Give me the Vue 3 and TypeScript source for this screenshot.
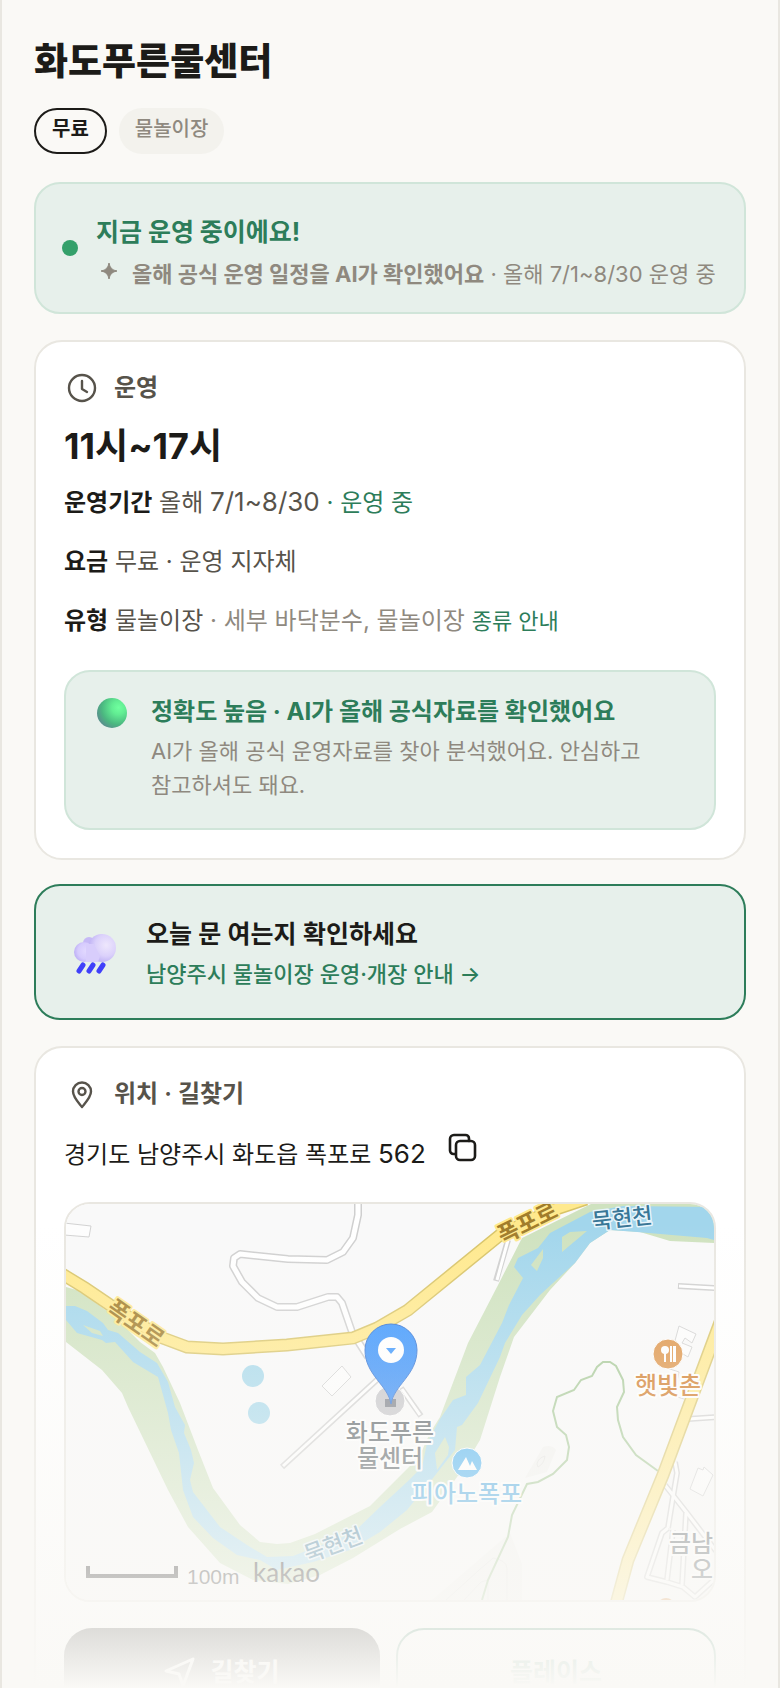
<script setup lang="ts">
const badges = [
  { label: '무료', strong: true },
  { label: '물놀이장', strong: false },
]

const street = '경기도 남양주시 화도읍 폭포로'
const streetNumber = '562'

function copyAddress(): void {
  navigator.clipboard?.writeText(`${street} ${streetNumber}`)
}
</script>

<template>
  <div class="screen">
    <main class="page">
      <header class="head">
        <h1>화도푸른물센터</h1>
        <ul class="badges">
          <li v-for="b in badges" :key="b.label" :class="['badge', { strong: b.strong }]">{{ b.label }}</li>
        </ul>
      </header>

      <section class="status">
        <span class="dot"></span>
        <div>
          <p class="status-title">지금 운영 중이에요!</p>
          <p class="status-sub">
            <svg class="spark" viewBox="0 0 24 24" aria-hidden="true">
              <path d="M13 4 Q14 11 21 12 Q14 13 13 20 Q12 13 5 12 Q12 11 13 4Z" fill="#8f897f" stroke="#8f897f" stroke-linejoin="round" />
            </svg>
            <span><b>올해 공식 운영 일정을 AI가 확인했어요</b> · 올해 7/1~8/30 운영 중</span>
          </p>
        </div>
      </section>

      <section class="card">
        <h2>
          <svg class="head-icon" viewBox="0 0 36 36" aria-hidden="true">
            <circle cx="18" cy="18" r="13" />
            <path d="M18 11v8l5 3" />
          </svg>
          운영
        </h2>
        <p class="hours">11시~17시</p>
        <p class="row"><b>운영기간</b> 올해 <span class="num">7/1~8/30</span> <span class="green">· 운영 중</span></p>
        <p class="row"><b>요금</b> 무료 · 운영 지자체</p>
        <p class="row"><b>유형</b> 물놀이장 <span class="muted">· 세부 바닥분수, 물놀이장</span> <a class="guide" href="#types">종류 안내</a></p>
        <div class="accuracy">
          <svg class="ball" viewBox="0 0 30 30" aria-hidden="true">
            <defs>
              <radialGradient id="ball-fill" cx="0.72" cy="0.32" r="0.75">
                <stop offset="0" stop-color="#70ff9f" />
                <stop offset="0.3" stop-color="#62ed93" />
                <stop offset="0.75" stop-color="#4bb780" />
                <stop offset="1" stop-color="#58938c" />
              </radialGradient>
            </defs>
            <circle cx="15" cy="15" r="15" fill="url(#ball-fill)" />
          </svg>
          <div>
            <p class="accuracy-title">정확도 높음 · AI가 올해 공식자료를 확인했어요</p>
            <p class="accuracy-text">AI가 올해 공식 운영자료를 찾아 분석했어요. 안심하고 참고하셔도 돼요.</p>
          </div>
        </div>
      </section>

      <a class="notice" href="#notice">
        <svg class="cloud" viewBox="0 0 46 46" aria-hidden="true">
          <defs>
            <radialGradient id="cloud-big" cx="0.65" cy="0.4" r="0.65">
              <stop offset="0" stop-color="#eee7fc" />
              <stop offset="0.6" stop-color="#dbd1fb" />
              <stop offset="1" stop-color="#bdb0f4" />
            </radialGradient>
            <radialGradient id="cloud-small" cx="0.6" cy="0.45" r="0.62">
              <stop offset="0" stop-color="#e2d9ff" />
              <stop offset="0.65" stop-color="#d6cbfd" />
              <stop offset="1" stop-color="#bcaef5" />
            </radialGradient>
          </defs>
          <circle cx="17" cy="12" r="6" fill="#c6b9f6" />
          <circle cx="30" cy="17" r="14" fill="url(#cloud-big)" />
          <circle cx="12" cy="21" r="10" fill="url(#cloud-small)" />
          <path d="M14 13h8l6 12-2 6H14z" fill="#d8cdfc" />
          <path d="M11 34 7 40M21 34l-4 6M31 34l-4 6" stroke="#4040fa" stroke-width="5" stroke-linecap="round" />
        </svg>
        <span class="notice-body">
          <strong>오늘 문 여는지 확인하세요</strong>
          <span>남양주시 물놀이장 운영·개장 안내 →</span>
        </span>
      </a>

      <section class="card">
        <h2>
          <svg class="head-icon" viewBox="0 0 36 36" aria-hidden="true">
            <path d="M18 31C14 26 9 21 9 15.500a9 9 0 0 1 18 0C27 21 22 26 18 31Z" />
            <circle cx="18" cy="15.500" r="3.500" />
          </svg>
          위치 · 길찾기
        </h2>
        <div class="address">
          <span>{{ street }} <span class="num">{{ streetNumber }}</span></span>
          <button class="copy" type="button" aria-label="주소 복사" @click="copyAddress">
            <svg viewBox="0 0 32 32" aria-hidden="true">
              <path d="M9 22H7.500A3.500 3.500 0 0 1 4 18.500V7a4 4 0 0 1 4-4h11.500A3.500 3.500 0 0 1 23 6.500V9" />
              <rect x="10" y="9" width="19" height="19" rx="4" />
            </svg>
          </button>
        </div>

        <div class="map">
          <svg viewBox="0 0 648 396" preserveAspectRatio="xMidYMid slice" role="img" aria-label="지도">
            <defs>
              <linearGradient id="pin-fill" x1="0" y1="0" x2="0" y2="1">
                <stop offset="0" stop-color="#3895ff" />
                <stop offset="1" stop-color="#2f87f5" />
              </linearGradient>
            </defs>
            <rect width="648" height="396" fill="#f9f9f9" />
            <path class="bank" d="M0 83 14 87 49 113 74 138 89 149 97 163 114 199 132 246 147 284 174 321 194 338 211 340 224 339 249 330 304 302 342 264 354 251 364 229 374 213 402 139 431 83 456 34 527-1H648V39L604 37 574 28 544 26 524 39 509 59 484 86 448 133 434 173 414 236 396 266 366 308 334 325 287 354 254 371 222 380 187 376 154 359 122 323 102 286 62 203 56 189 36 166 0 138Z" />
            <path class="water" d="M0 102H9L21 107 37 119 42 126 52 129 74 148 91 159 102 178 109 203 119 221 118 229 125 246 128 259 124 276 127 288 154 323 181 341 201 353 227 352 287 329 314 303 341 278 356 263 361 239 374 215 387 196 400 191V173L414 161 436 119 443 101 457 74 448 63 452 54 472 44 484 29 524 8 557 2 648 3V36L641 34 571 28 544 26 524 39 509 59 487 79 474 91 456 111 439 139 434 153 412 199 396 221 391 223 389 246 367 274 341 306 314 328 284 346 247 358 211 366 194 356 171 351 147 334 127 313 117 286 113 249 105 226 102 209 92 173 67 158 49 138 40 139 36 136 11 129 0 116Z" />
            <path class="bank" d="M17 121 34 127 37 132 26 129ZM496 33 504 28 521 27 496 48ZM477 45V54L471 67 465 61ZM379 233 383 243 382 251 371 266 369 249Z" />
            <path d="M366 396 444 329 456 360V396ZM459 274 477 243Q486 240 490 246L481 268Z" fill="#f2f2f0" />
            <path d="M380 396 412 367 427 354Q440 356 441 364V396M398 396 415 378 422 376V396M471 260Q472 254 479 252 478 260 472 263Z" fill="none" stroke="#e3e3e1" />
            <path class="building" d="M-2 19 25 22 23 33-2 31ZM276 162 285 173 266 192 256 182ZM613 122 630 130 626 139 619 134 616 139 626 143 622 153 607 144ZM601 164 613 168 608 192 618 195M624 285 632 264 637 266 638 263 647 271 637 292Z" />
            <g class="lane-edge">
              <path d="M292-3V11L287 34 277 48 261 56 222 55 174 50 168 54 167 62 176 78 192 94 211 103H231L262 93 271 93 276 99 286 128 302 153" />
              <path class="thin" d="M325 163 216 263M335 184 355 212M442 36 430 77M612 82 650 84M622 215 650 213M609 258 611 269 607 293 602 324M599 281 621 309 650 347M602 324 596 329 581 373 601 378 617 383 629 393 650 374M620 309 616 381M607 326 601 376" />
            </g>
            <g class="lane">
              <path d="M292-3V11L287 34 277 48 261 56 222 55 174 50 168 54 167 62 176 78 192 94 211 103H231L262 93 271 93 276 99 286 128 302 153" />
              <path class="thin" d="M325 163 217 262M336 185 354 211M442 36 431 76M613 82 650 84M622 215 650 213M609 258 611 269 607 293 602 324M599 281 621 309 650 347M602 324 596 329 581 373 601 378 617 383 629 393 650 374M620 309 616 381M607 326 601 376" />
            </g>
            <path d="M592 267 570 251 557 233 552 216 551 203 558 188 557 176 550 162 544 158H537L531 163 526 172 515 176 508 186 491 193 487 207 491 223 500 231 503 243 501 256 487 270 472 278 461 280 446 311 442 333 422 376 416 396" fill="none" stroke="#a5c896" stroke-width="2" />
            <path class="road-edge" d="M-4 70 19 84 44 101 94 133 121 143 157 145 221 141 287 134 311 124 342 106 434 31 484 7 520-5M656 113 597 271 562 356 550 400" />
            <path class="road" d="M-4 70 19 84 44 101 94 133 121 143 157 145 221 141 287 134 311 124 342 106 434 31 484 7 520-5M656 113 597 271 562 356 550 400" />
            <circle cx="187" cy="172" r="11" fill="#a5d8eb" />
            <circle cx="193" cy="209" r="11" fill="#a5d8eb" />
            <g class="road-name">
              <text transform="translate(65 126) rotate(35)">폭포로</text>
              <text transform="translate(465 26) rotate(-26)">폭포로</text>
            </g>
            <g class="river-name">
              <text transform="translate(557 22) rotate(-6)">묵현천</text>
              <text transform="translate(270 348) rotate(-20)">묵현천</text>
            </g>
            <circle cx="324" cy="197" r="15" fill="#c4c4c8" stroke="#fff" />
            <path d="M319 203h11v-8h-11z" fill="#777b84" />
            <path d="M325 200C322 181 299 171 299 146a26 26 0 0 1 52 0C351 171 328 181 325 200Z" fill="url(#pin-fill)" stroke="#2c70d4" />
            <circle cx="325" cy="146" r="13" fill="#fff" />
            <path d="M320 144h10l-5 6z" fill="#3895ff" />
            <circle cx="401" cy="259" r="15" fill="#4cb2f0" stroke="#fff" />
            <path d="M392 266 400 253 404 262 406 257 411 266Z" fill="#fff" />
            <circle cx="602" cy="150" r="15" fill="#dd9143" stroke="#fff" />
            <path d="M604 142h2v16h-2zM607 142h3v16h-3zM598 148h2v10h-2z" fill="#fff" />
            <circle cx="599" cy="146" r="4" fill="#fff" />
            <circle cx="600" cy="403" r="9" fill="#dd9143" />
            <g class="place">
              <text x="324" y="237" fill="#555d62">화도푸른</text>
              <text x="324" y="263" fill="#555d62">물센터</text>
              <text x="401" y="298" fill="#4ba8e0">피아노폭포</text>
              <text x="602" y="190" fill="#cf7722">햇빛촌</text>
              <text x="625" y="348" fill="#555d62">금남</text>
              <text x="636" y="374" fill="#555d62">오</text>
            </g>
            <path d="M22 362V372H110V362" fill="none" stroke="#222" stroke-width="4" />
            <text class="scale" x="121" y="380">100m</text>
            <text class="logo" x="187" y="378">kakao</text>
          </svg>
        </div>

        <div class="actions">
          <button class="primary" type="button">
            <svg viewBox="0 0 32 32" aria-hidden="true">
              <path d="M29 3 2 15l13 3 4 12Z" />
            </svg>
            길찾기
          </button>
          <a class="secondary" href="#place">플레이스</a>
        </div>
      </section>
    </main>
    <div class="fade"></div>
  </div>
</template>

<style>
body {
  background: #faf9f6;
}
</style>

<style scoped>
* {
  box-sizing: border-box;
}
.screen {
  position: relative;
  height: 100vh;
  overflow: hidden;
  border: solid #e9e7e1;
  border-width: 0 2px;
  background: #faf9f6;
  color: #1c1b18;
  font-family: Inter, "Noto Sans CJK KR", sans-serif;
  font-size: 24px;
  line-height: 36px;
  word-break: keep-all;
}
.page {
  padding: 36px 32px;
}
h1,
h2,
p,
ul {
  margin: 0;
  padding: 0;
}
h1 {
  font-size: 37px;
  line-height: 52px;
  font-weight: 800;
}
.badges {
  display: flex;
  gap: 12px;
  margin: 20px 0 28px;
  list-style: none;
}
.badge {
  padding: 8px 16px 12px;
  border-radius: 24px;
  background: #f3f2ed;
  color: #8f897f;
  font-size: 20px;
  line-height: 26px;
  font-weight: 500;
}
.badge.strong {
  padding: 6px 16px 10px;
  border: 2px solid #1c1b18;
  background: transparent;
  color: #1c1b18;
  font-weight: 600;
}
.status {
  display: flex;
  align-items: center;
  gap: 18px;
  padding: 28px 26px 18px;
  border: 2px solid #d0e5d9;
  border-radius: 26px;
  background: #e7f0eb;
}
.dot {
  flex: none;
  width: 16px;
  height: 16px;
  margin-bottom: 10px;
  border-radius: 50%;
  background: #34a06a;
}
.status-title {
  margin-bottom: 2px;
  color: #2d7d5a;
  font-size: 25px;
  line-height: 40px;
  font-weight: 700;
}
.status-sub {
  display: flex;
  gap: 12px;
  color: #8f897f;
  font-size: 22px;
  line-height: 40px;
}
.spark {
  flex: none;
  width: 24px;
  height: 34px;
}
.card {
  margin-top: 26px;
  padding: 28px;
  border: 2px solid #e9e7e1;
  border-radius: 28px;
  background: #fff;
}
h2 {
  display: flex;
  align-items: center;
  gap: 14px;
  color: #57534b;
  font-size: 24px;
  line-height: 36px;
  font-weight: 600;
}
.head-icon {
  width: 36px;
  height: 36px;
  fill: none;
  stroke: #57534b;
  stroke-width: 2.4;
  stroke-linecap: round;
  stroke-linejoin: round;
}
.hours {
  margin: 14px 0 10px;
  font-size: 36px;
  line-height: 52px;
  font-weight: 700;
}
.num {
  font-size: 26px;
}
.row {
  margin-bottom: 19px;
  color: #57534b;
  line-height: 40px;
}
.row b {
  color: #1c1b18;
  font-weight: 700;
}
.row .green {
  color: #2d7d5a;
}
.row .muted {
  color: #8f897f;
}
.guide {
  color: #2d7d5a;
  font-size: 22px;
  text-decoration: none;
}
.accuracy {
  display: flex;
  gap: 24px;
  margin-top: 29px;
  padding: 20px 64px 26px 31px;
  border: 2px solid #d0e5d9;
  border-radius: 26px;
  background: #e7f0eb;
}
.ball {
  flex: none;
  width: 30px;
  height: 30px;
  margin-top: 6px;
}
.accuracy-title {
  margin-bottom: 2px;
  color: #2d7d5a;
  font-size: 24px;
  line-height: 40px;
  font-weight: 700;
}
.accuracy-text {
  color: #8f897f;
  font-size: 22px;
  line-height: 34px;
}
.notice {
  display: flex;
  align-items: center;
  gap: 28px;
  margin-top: 24px;
  padding: 28px 36px 24px;
  border: 2px solid #2d7d5a;
  border-radius: 26px;
  background: #e7f0eb;
  color: #2d7d5a;
  text-decoration: none;
}
.cloud {
  flex: none;
  width: 46px;
  height: 46px;
}
.notice-body {
  font-size: 22px;
  line-height: 40px;
  font-weight: 500;
}
.notice-body strong {
  display: block;
  color: #1c1b18;
  font-size: 25px;
  font-weight: 600;
}
.address {
  display: flex;
  align-items: center;
  gap: 20px;
  margin: 20px 0 26px;
  line-height: 40px;
}
.copy {
  display: flex;
  padding: 0;
  border: 0;
  background: none;
}
.copy svg {
  width: 32px;
  height: 44px;
  padding-bottom: 12px;
  fill: none;
  stroke: #1c1b18;
  stroke-width: 2.6;
  stroke-linecap: round;
}
.map {
  overflow: hidden;
  border: 2px solid #e9e7e1;
  border-radius: 26px;
}
.map svg {
  display: block;
  width: 100%;
  height: auto;
}
.bank {
  fill: #cfe2bf;
}
.water {
  fill: #a2d6ec;
}
.building {
  fill: #fdfdfd;
  stroke: #d2d2d2;
}
.lane-edge,
.lane {
  fill: none;
  stroke: #cfcfcf;
  stroke-width: 8;
  stroke-linejoin: round;
}
.lane {
  stroke: #fff;
  stroke-width: 5;
}
.lane-edge .thin {
  stroke-width: 6;
}
.lane .thin {
  stroke-width: 3;
}
.road-edge,
.road {
  fill: none;
  stroke: #d8c468;
  stroke-width: 13;
}
.road {
  stroke: #ffe98d;
  stroke-width: 10;
}
.map text {
  font-family: Inter, "Noto Sans CJK KR", sans-serif;
  text-anchor: middle;
  paint-order: stroke;
  stroke-linejoin: round;
}
.road-name text {
  font-size: 23px;
  font-weight: 600;
  fill: #a17d2b;
  stroke: #ffe98d;
  stroke-width: 4;
}
.river-name text {
  font-size: 22px;
  font-weight: 500;
  fill: #397797;
  stroke: #e8f5fb;
  stroke-width: 3;
}
.place text {
  font-size: 24px;
  font-weight: 500;
  stroke: #fff;
  stroke-width: 4;
}
.map .scale {
  font-family: "Liberation Sans", sans-serif;
  font-size: 21px;
  text-anchor: start;
  fill: #333;
}
.map .logo {
  font-family: Lato, sans-serif;
  font-size: 26px;
  text-anchor: start;
  fill: #222;
}
.actions {
  display: flex;
  gap: 16px;
  margin-top: 26px;
}
.primary,
.secondary {
  display: flex;
  flex: 1 1 0;
  align-items: center;
  justify-content: center;
  gap: 14px;
  min-height: 88px;
  padding: 0 16px;
  border: 0;
  border-radius: 28px;
  background: #1c1b18;
  color: #fff;
  font: inherit;
  font-weight: 700;
  font-size: 25px;
}
.primary svg {
  width: 32px;
  height: 32px;
  fill: none;
  stroke: #fff;
  stroke-width: 3;
  stroke-linejoin: round;
}
.secondary {
  border: 2px solid #2d7d5a;
  background: transparent;
  color: #2d7d5a;
  text-decoration: none;
}
.fade {
  position: absolute;
  right: -2px;
  bottom: 0;
  left: -2px;
  height: 464px;
  background: linear-gradient(to bottom, transparent, #faf9f6);
  pointer-events: none;
}
</style>
